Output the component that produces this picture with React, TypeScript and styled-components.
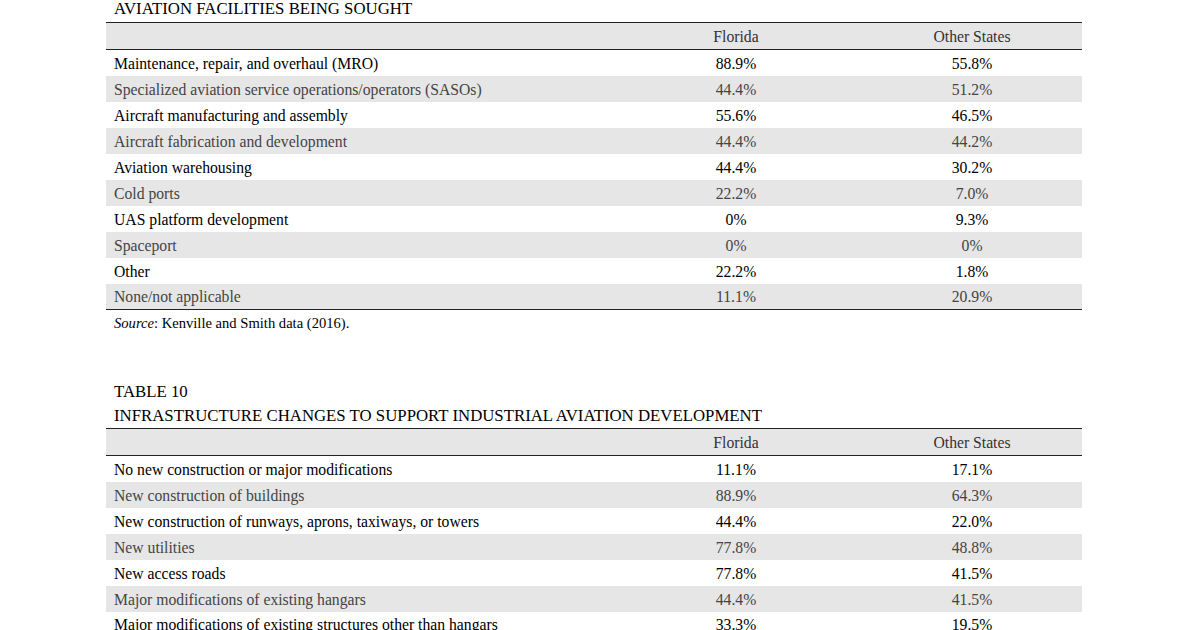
import React from "react";
import styled, {createGlobalStyle} from "styled-components";

const GlobalStyle = createGlobalStyle`
	html, body {
		margin: 0;
		padding: 0;
		background: #fff;
	}
	body {
		font-family: "Liberation Serif", "Times New Roman", serif;
		color: #111;
		width: 1200px;
		height: 630px;
		overflow: hidden;
	}
`;

const Page = styled.div`
	padding: 0 118px 0 106px;
	display: flex;
	flex-direction: column;
`;

const Caption = styled.div`
	font-size: 16.8px;
	line-height: 24px;
	padding-left: 8px;
	color: #000;
`;

const Title = styled(Caption)`
	line-height: 18px;
	margin-bottom: 4px;
`;

const Table = styled.table`
	width: 976px;
	border-collapse: collapse;
	table-layout: fixed;
	font-size: 15.7px;
	border-top: 1.5px solid #222;
	border-bottom: 1.5px solid #222;
`;

const HeadRow = styled.tr`
	background: #e6e6e6;
	height: 27px;
	border-bottom: 1.5px solid #222;
`;

const HeadCell = styled.th`
	font-weight: normal;
	color: #333;
	text-align: center;
	padding: 2px 0 0;
	vertical-align: middle;
`;

const Row = styled.tr<{$shaded: boolean}>`
	height: 26px;
	background: ${(p) => (p.$shaded ? "#e6e6e6" : "#fff")};
	color: ${(p) => (p.$shaded ? "#444" : "#000")};
`;

const Label = styled.td`
	padding: 2px 0 0 8px;
	vertical-align: middle;
	white-space: nowrap;
`;

const Value = styled.td`
	padding: 2px 0 0;
	text-align: center;
	vertical-align: middle;
`;

const Source = styled.div`
	font-size: 14.6px;
	line-height: 26px;
	padding-left: 8px;
	margin-bottom: 44px;
	color: #000;
`;

type Item = [string, string, string];

const facilities: Item[] = [
	["Maintenance, repair, and overhaul (MRO)", "88.9%", "55.8%"],
	["Specialized aviation service operations/operators (SASOs)", "44.4%", "51.2%"],
	["Aircraft manufacturing and assembly", "55.6%", "46.5%"],
	["Aircraft fabrication and development", "44.4%", "44.2%"],
	["Aviation warehousing", "44.4%", "30.2%"],
	["Cold ports", "22.2%", "7.0%"],
	["UAS platform development", "0%", "9.3%"],
	["Spaceport", "0%", "0%"],
	["Other", "22.2%", "1.8%"],
	["None/not applicable", "11.1%", "20.9%"],
];

const infrastructure: Item[] = [
	["No new construction or major modifications", "11.1%", "17.1%"],
	["New construction of buildings", "88.9%", "64.3%"],
	["New construction of runways, aprons, taxiways, or towers", "44.4%", "22.0%"],
	["New utilities", "77.8%", "48.8%"],
	["New access roads", "77.8%", "41.5%"],
	["Major modifications of existing hangars", "44.4%", "41.5%"],
	["Major modifications of existing structures other than hangars", "33.3%", "19.5%"],
];

const DataTable = ({rows}: {rows: Item[]}) => (
	<Table>
		<colgroup>
			<col style={{width: 504}} />
			<col style={{width: 252}} />
			<col style={{width: 220}} />
		</colgroup>
		<thead>
			<HeadRow>
				<HeadCell />
				<HeadCell>Florida</HeadCell>
				<HeadCell>Other States</HeadCell>
			</HeadRow>
		</thead>
		<tbody>
			{rows.map(([label, fl, other], i) => (
				<Row key={label} $shaded={i % 2 === 1}>
					<Label>{label}</Label>
					<Value>{fl}</Value>
					<Value>{other}</Value>
				</Row>
			))}
		</tbody>
	</Table>
);

export default function App() {
	return (
		<React.Fragment>
			<GlobalStyle />
			<Page>
				<Title>AVIATION FACILITIES BEING SOUGHT</Title>
				<DataTable rows={facilities} />
				<Source>
					<i>Source</i>: Kenville and Smith data (2016).
				</Source>
				<Caption>TABLE 10</Caption>
				<Caption>INFRASTRUCTURE CHANGES TO SUPPORT INDUSTRIAL AVIATION DEVELOPMENT</Caption>
				<DataTable rows={infrastructure} />
			</Page>
		</React.Fragment>
	);
}
